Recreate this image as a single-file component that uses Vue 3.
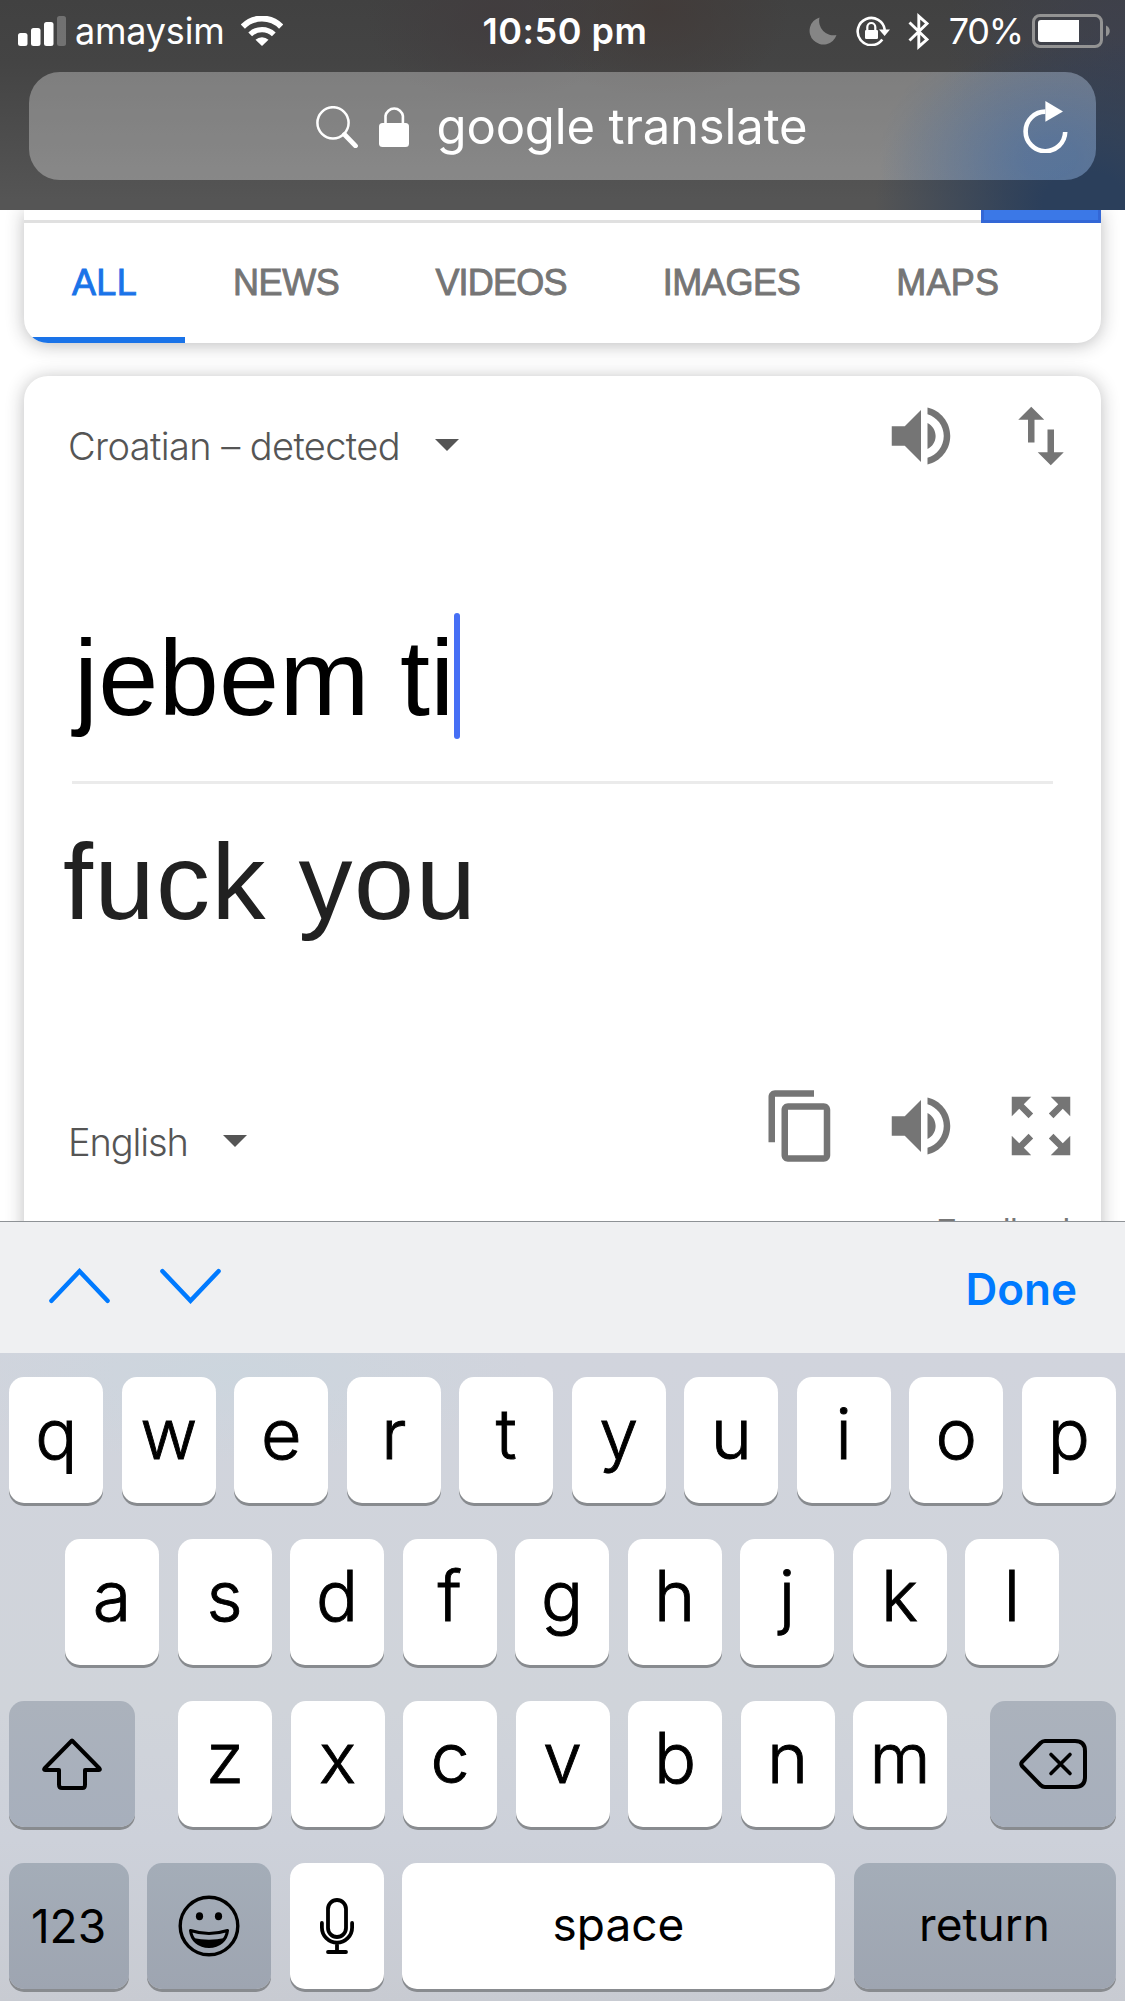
<template>
  <div class="phone">
    <!-- Safari header -->
    <header class="header">
      <div class="status">
        <div class="status-left">
          <svg class="signal" width="48" height="30" viewBox="0 0 48 30" fill="#fff">
            <rect x="0" y="17" width="9.5" height="13" rx="2.5" />
            <rect x="13" y="12" width="9.5" height="18" rx="2.5" />
            <rect x="26" y="6" width="9.5" height="24" rx="2.5" />
            <rect x="39" y="0" width="9" height="30" rx="2.5" opacity="0.25" />
          </svg>
          <span class="carrier">amaysim</span>
          <svg class="wifi" width="42" height="30" viewBox="0 0 42 30" fill="none" stroke="#fff">
            <path d="M1.8 10.6a27 27 0 0 1 38.4 0" stroke-width="6" />
            <path d="M9.2 18.4a17 17 0 0 1 23.6 0" stroke-width="5.4" />
            <path d="M14.5 23.7a9.5 9.5 0 0 1 13 0L21 30z" fill="#fff" stroke="none" />
          </svg>
        </div>
        <span class="time">10:50 pm</span>
        <div class="status-right">
          <svg class="moon" width="28" height="28" viewBox="0 0 28 28" fill="#858585">
            <path d="M10.5 0.5A14.5 14.5 0 0 0 27.5 18A13.8 13.8 0 1 1 10.5 0.5z" />
          </svg>
          <svg class="rotation" width="34" height="30" viewBox="0 0 34 30" fill="none" stroke="#fff">
            <path d="M26.3 23.5A13.6 13.6 0 1 1 28.8 14" stroke-width="2.6" />
            <path d="M23 13.5h11L28.6 20z" fill="#fff" stroke="none" />
            <rect x="9" y="14" width="13" height="9" rx="1.2" fill="#fff" stroke="none" />
            <path d="M11.3 14v-3a4 4 0 0 1 8 0v3" stroke-width="2.2" />
          </svg>
          <svg class="bluetooth" width="22" height="37" viewBox="0 0 22 37" fill="none" stroke="#fff" stroke-width="2.9">
            <path d="M1.5 9.5L19 26.5L10.8 33.7V3.3L19 10.5L1.5 27.5" />
          </svg>
          <span class="percent">70%</span>
          <svg class="battery" width="78" height="34" viewBox="0 0 78 34">
            <rect x="1.5" y="1.5" width="68" height="31" rx="6.5" fill="none" stroke="#939393" stroke-width="3" />
            <path d="M9 6h38v22H9a3 3 0 0 1-3-3V9a3 3 0 0 1 3-3z" fill="#fff" />
            <path d="M74 11.5c5 2 5 9 0 11z" fill="#939393" />
          </svg>
        </div>
      </div>
      <div class="address">
        <span></span>
        <div class="address-main">
          <svg width="42" height="42" viewBox="0 0 42 42" fill="none" stroke="#fff">
            <circle cx="17" cy="16.8" r="15.6" stroke-width="2.5" />
            <path d="M28.5 28.5L39.5 39.8" stroke-width="4.8" stroke-linecap="round" />
          </svg>
          <svg class="lock" width="30" height="41" viewBox="0 0 30 41">
            <rect x="0" y="17" width="30" height="24" rx="3.5" fill="#fff" />
            <path d="M6.5 18v-8a8.8 8.8 0 0 1 17.4 0v8" fill="none" stroke="#fff" stroke-width="2.6" />
          </svg>
          <span class="query">google translate</span>
        </div>
        <svg class="reload" width="45" height="52" viewBox="0 0 45 52">
          <path d="M42.2 31A19.8 19.8 0 1 1 22.4 10.6" fill="none" stroke="#fff" stroke-width="4.6" />
          <path d="M22.4 0v20.8L40 10.4z" fill="#fff" />
        </svg>
      </div>
    </header>

    <!-- search results page -->
    <main class="page">
      <section class="card search">
        <div class="search-box">
          <div class="search-input"></div>
          <div class="search-button"></div>
        </div>
        <nav class="tabs">
          <span
            v-for="tab in tabs"
            :key="tab"
            class="tab"
            :class="{ active: tab === activeTab }"
          >{{ tab }}</span>
        </nav>
      </section>

      <section class="card translate">
        <div class="lang-row">
          <div class="lang">
            <span class="lang-source">Croatian – detected</span>
            <i class="caret-down"></i>
          </div>
          <div class="tools">
            <svg class="icon" viewBox="0 0 24 24"><path :d="icons.volume" /></svg>
            <svg class="icon" viewBox="0 0 24 24"><path :d="icons.swap" /></svg>
          </div>
        </div>
        <div class="source">
          <span>{{ sourceText }}</span>
          <i class="cursor"></i>
        </div>
        <div class="target">{{ targetText }}</div>
        <div class="lang-row bottom">
          <div class="lang">
            <span class="lang-target">English</span>
            <i class="caret-down"></i>
          </div>
          <div class="tools">
            <svg class="icon" viewBox="0 0 24 24"><path :d="icons.copy" /></svg>
            <svg class="icon" viewBox="0 0 24 24"><path :d="icons.volume" /></svg>
            <svg class="icon" viewBox="0 0 24 24"><path :d="icons.expand" /></svg>
          </div>
        </div>
        <div class="feedback">Feedback</div>
      </section>
    </main>

    <!-- form accessory bar -->
    <div class="accessory">
      <div class="arrows">
        <svg width="61" height="36" viewBox="0 0 62 36">
          <path d="M2.5 33L31 3L59.5 33" />
        </svg>
        <svg width="61" height="36" viewBox="0 0 62 36">
          <path d="M2.5 3L31 33L59.5 3" />
        </svg>
      </div>
      <span class="done">Done</span>
    </div>

    <!-- keyboard -->
    <div class="keyboard">
      <div class="row">
        <div v-for="k in rows[0]" :key="k" class="key">{{ k }}</div>
      </div>
      <div class="row">
        <div v-for="k in rows[1]" :key="k" class="key">{{ k }}</div>
      </div>
      <div class="row spread">
        <div class="key dark shift">
          <svg width="60" height="52" viewBox="0 0 60 52" fill="none" stroke="#000" stroke-width="4" stroke-linejoin="round">
            <path d="M30 2.5L2.5 30.5Q1.5 32 3.5 32H17V46.5Q17 50 20 50H40.5Q43 50 43 46.5V32H56.5Q58.5 32 57.5 30.5Z" />
          </svg>
        </div>
        <div class="letters">
          <div v-for="k in rows[2]" :key="k" class="key">{{ k }}</div>
        </div>
        <div class="key dark shift">
          <svg width="68" height="50" viewBox="0 0 68 50" fill="none" stroke="#000" stroke-width="4" stroke-linecap="round" stroke-linejoin="round">
            <path d="M26 2H56Q66 2 66 12V38Q66 48 56 48H26Q23.5 48 21.5 46L3 27Q1.5 25 3 23L21.5 4Q23.5 2 26 2Z" />
            <path d="M32 15.5L51 34.5M51 15.5L32 34.5" stroke-width="3.6" />
          </svg>
        </div>
      </div>
      <div class="row">
        <div class="key dark small numbers">123</div>
        <div class="key dark emoji">
          <svg width="62" height="62" viewBox="0 0 62 62">
            <circle cx="31" cy="31" r="28.8" fill="none" stroke="#000" stroke-width="3.4" />
            <ellipse cx="21.5" cy="21.3" rx="3.6" ry="4" />
            <ellipse cx="40.5" cy="21.3" rx="3.6" ry="4" />
            <path d="M12.5 35.5Q31 41.5 49.5 35.5C48.5 45 41 51.5 31 51.5S13.5 45 12.5 35.5Z" fill="none" stroke="#000" stroke-width="3" stroke-linejoin="round" />
            <path d="M15 43Q31 46.5 47 43Q42 51.5 31 51.5T15 43Z" />
          </svg>
        </div>
        <div class="key">
          <svg width="34" height="56" viewBox="0 0 34 56" fill="none" stroke="#000" stroke-width="3.8" stroke-linecap="round">
            <rect x="8" y="2" width="18" height="37" rx="9" />
            <path d="M1.9 25v4.5a15.1 15.1 0 0 0 30.2 0V25M17 45v8.500M8 54h18" />
          </svg>
        </div>
        <div class="key small space">space</div>
        <div class="key dark small return">return</div>
      </div>
    </div>
  </div>
</template>

<script setup>
import { ref } from 'vue';

const tabs = ['ALL', 'NEWS', 'VIDEOS', 'IMAGES', 'MAPS'];
const activeTab = ref('ALL');

const sourceText = ref('jebem ti');
const targetText = ref('fuck you');

const rows = ['qwertyuiop', 'asdfghjkl', 'zxcvbnm'].map((r) => r.split(''));

const icons = {
  volume: 'M3 9v6h4l5 5V4L7 9H3zm13.5 3c0-1.77-1-3.29-2.5-4.03v8.05c1.48-.73 2.5-2.25 2.5-4.02zM14 3.23v2.06c2.89.86 5 3.54 5 6.71s-2.11 5.85-5 6.71v2.06c4.01-.91 7-4.49 7-8.77s-2.99-7.86-7-8.77z',
  swap: 'M16 17.01V10h-2v7.01h-3L15 21l4-3.99h-3zM9 3L5 6.99h3V14h2V6.99h3L9 3z',
  copy: 'M16 1H4c-1.1 0-2 .9-2 2v14h2V3h12V1zm3 4H8c-1.1 0-2 .9-2 2v14c0 1.1.9 2 2 2h11c1.1 0 2-.9 2-2V7c0-1.1-.9-2-2-2zm0 16H8V7h11v14z',
  expand: 'M15 3l2.3 2.3-2.89 2.87 1.42 1.42L18.7 6.7 21 9V3zM3 9l2.3-2.3 2.87 2.89 1.42-1.42L6.7 5.3 9 3H3zm6 12l-2.3-2.3 2.89-2.87-1.42-1.42L5.3 17.3 3 15v6zm12-6l-2.3 2.3-2.87-2.89-1.42 1.42 2.89 2.87L15 21h6z'
};
</script>

<style>
body {
  margin: 0;
  background: #fff;
}
</style>

<style scoped>
* {
  box-sizing: border-box;
}

.phone {
  display: flex;
  flex-direction: column;
  width: 1125px;
  height: 2001px;
  overflow: hidden;
  background: #fff;
  font-family: Inter, 'Liberation Sans', sans-serif;
}

svg {
  display: block;
  flex: none;
}

/* 顶部 */
.header {
  flex: none;
  height: 210px;
  color: #fff;
  background:
    radial-gradient(ellipse 210px 170px at 1085px 205px, #2b3f5b 20%, rgba(43, 63, 91, 0) 100%),
    radial-gradient(ellipse 180px 220px at 1125px 60px, rgba(60, 64, 80, 0.8), rgba(60, 64, 80, 0)),
    radial-gradient(ellipse 130px 90px at 660px 10px, rgba(66, 59, 57, 0.9), rgba(66, 59, 57, 0)),
    radial-gradient(ellipse 130px 90px at 495px 15px, rgba(65, 60, 62, 0.9), rgba(65, 60, 62, 0)),
    linear-gradient(#414141, #444 30%, #555 95%);
}

.status {
  display: grid;
  grid-template-columns: 1fr auto 1fr;
  align-items: center;
  height: 61px;
  padding: 0 15px 0 18px;
  font-size: 36px;
  line-height: 61px;
}

.status-left,
.status-right {
  display: flex;
  align-items: center;
}

.status-right {
  justify-content: flex-end;
}

.carrier {
  margin-left: 9px;
  padding-top: 1px;
  letter-spacing: -0.2px;
}

.wifi {
  margin-left: 16px;
}

.time {
  padding: 1px 0 0 2px;
  font-weight: 600;
  letter-spacing: 0.5px;
}

.rotation {
  margin-left: 19px;
}

.bluetooth {
  margin-left: 18px;
}

.percent {
  margin-left: 19px;
  padding-top: 1px;
  letter-spacing: -1.2px;
}

.battery {
  margin-left: 9px;
}

.address {
  display: grid;
  grid-template-columns: 1fr auto 1fr;
  align-items: center;
  height: 108px;
  margin: 11px 29px 0;
  padding: 0 28px;
  border-radius: 31px;
  background:
    radial-gradient(ellipse 170px 130px at 1020px 85px, rgba(40, 100, 180, 0.3) 15%, rgba(40, 100, 180, 0) 100%),
    rgba(255, 255, 255, 0.31);
}

.address-main {
  display: flex;
  align-items: center;
  margin-right: 2px;
}

.lock {
  margin-left: 21px;
}

.query {
  margin-left: 28px;
  font-size: 49px;
  line-height: 108px;
  padding-top: 1px;
  letter-spacing: -0.15px;
}

.reload {
  justify-self: end;
}

/* 页面内容 */
.page {
  flex: none;
  height: 1011px;
  padding: 0 24px;
  overflow: hidden;
  font-family: 'Liberation Sans', Arial, sans-serif;
}

.card {
  background: #fff;
  box-shadow: 0 2px 18px rgba(32, 33, 36, 0.3);
}

.search {
  height: 133px;
  border-radius: 0 0 24px 24px;
  overflow: hidden;
}

.search-box {
  display: flex;
  height: 13px;
}

.search-input {
  flex: 1;
  border-bottom: 3px solid #e0e0e0;
}

.search-button {
  width: 120px;
  background: #3b78e7;
  border: 3px solid #3367d6;
  border-top: 0;
}

.tabs {
  display: flex;
  height: 120px;
}

.tab {
  padding: 0 48px;
  font-size: 36px;
  line-height: 119px;
  letter-spacing: -0.4px;
  color: #757575;
  -webkit-text-stroke: 0.9px currentColor;
}

.tab.active {
  color: #1a73e8;
  letter-spacing: 0.3px;
  border-bottom: 6px solid #1a73e8;
}

.tab:nth-child(3) {
  letter-spacing: -0.8px;
}

.tab:last-child {
  letter-spacing: 0.2px;
}

.translate {
  height: 1000px;
  margin-top: 33px;
  padding: 0 21px 0 48px;
  border-radius: 24px;
}

.lang-row {
  display: flex;
  justify-content: space-between;
  align-items: center;
  height: 120px;
}

.lang {
  display: flex;
  align-items: center;
  padding-top: 20px;
  font-family: Inter, sans-serif;
  font-size: 38px;
  font-weight: 300;
  line-height: 50px;
  color: #555;
}

.lang-source,
.lang-target {
  margin-left: -4px;
}

.lang-source {
  letter-spacing: -0.6px;
}

.lang-target {
  letter-spacing: -1.1px;
}

.caret-down {
  margin-left: 35px;
  margin-top: -2px;
  border: 12px solid transparent;
  border-top-color: #555;
  border-bottom: 0;
}

.tools {
  display: flex;
  gap: 42px;
}

.icon {
  width: 78px;
  height: 78px;
  fill: #757575;
}

.source {
  display: flex;
  height: 288px;
  margin-right: 27px;
  padding: 119px 0 0 2px;
  border-bottom: 3px solid #ebebeb;
  font-size: 108px;
  line-height: 126px;
  letter-spacing: 0.3px;
  color: #000;
}

.cursor {
  width: 6px;
  height: 126px;
  margin: -2px 0 0 -1px;
  border-radius: 3px;
  background: #466ff5;
}

.target {
  height: 282px;
  margin-left: -9px;
  padding-top: 35px;
  font-size: 108px;
  line-height: 126px;
  letter-spacing: 1.5px;
  color: #212121;
}

.bottom .lang {
  padding-top: 32px;
}

.feedback {
  padding: 25px 1px 0 0;
  font-size: 32.5px;
  line-height: 40px;
  text-align: right;
  color: #777;
}

/* 键盘工具条 */
.accessory {
  display: flex;
  justify-content: space-between;
  flex: none;
  height: 132px;
  padding: 0 48px 0 49px;
  border-top: 1px solid #8e9296;
  background: #eff0f2;
}

.arrows {
  display: flex;
  gap: 50px;
  padding-top: 46px;
}

.arrows path {
  fill: none;
  stroke: #007aff;
  stroke-width: 4.6;
  stroke-linecap: round;
}

.done {
  font-size: 44px;
  font-weight: 600;
  line-height: 134px;
  color: #007aff;
}

/* 键盘 */
.keyboard {
  display: flex;
  flex-direction: column;
  gap: 36px;
  flex: 1;
  padding: 24px 9px 0;
  background:
    radial-gradient(ellipse 300px 90px at 230px 20px, rgba(203, 214, 222, 0.8), rgba(203, 214, 222, 0)),
    linear-gradient(#d1d4dd, #d0d4da 55%, #cdd1da 75%, #c8cbd2);
}

.row {
  display: flex;
  justify-content: center;
  gap: 18.5px;
}

.row:nth-child(2),
.row:nth-child(4) {
  padding-right: 1px;
}

.spread {
  justify-content: space-between;
}

.letters {
  display: flex;
  gap: 18.5px;
}

.key {
  display: flex;
  justify-content: center;
  align-items: center;
  flex: none;
  width: 94px;
  height: 126px;
  border-radius: 15px;
  background: #fff;
  box-shadow: 0 3px 0 #888b8f;
  font-size: 70px;
  font-weight: 300;
  line-height: 114px;
  padding-bottom: 13px;
  color: #000;
  -webkit-text-stroke: 0.9px currentColor;
}

.key svg {
  margin-top: 13px;
}

.key.dark {
  background: linear-gradient(#abb2bc, #a7afbc);
}

.row:last-child .dark {
  background: linear-gradient(#a4adb8, #9ea5b1);
}

.key.shift {
  width: 126px;
}

.key.small {
  font-size: 46px;
  font-weight: 400;
  padding-bottom: 5px;
  -webkit-text-stroke: 0;
}

.key.numbers {
  width: 120px;
  padding-bottom: 1px;
}

.key.emoji {
  width: 124px;
}

.key.space {
  width: 433px;
}

.key.return {
  width: 262px;
}
</style>
